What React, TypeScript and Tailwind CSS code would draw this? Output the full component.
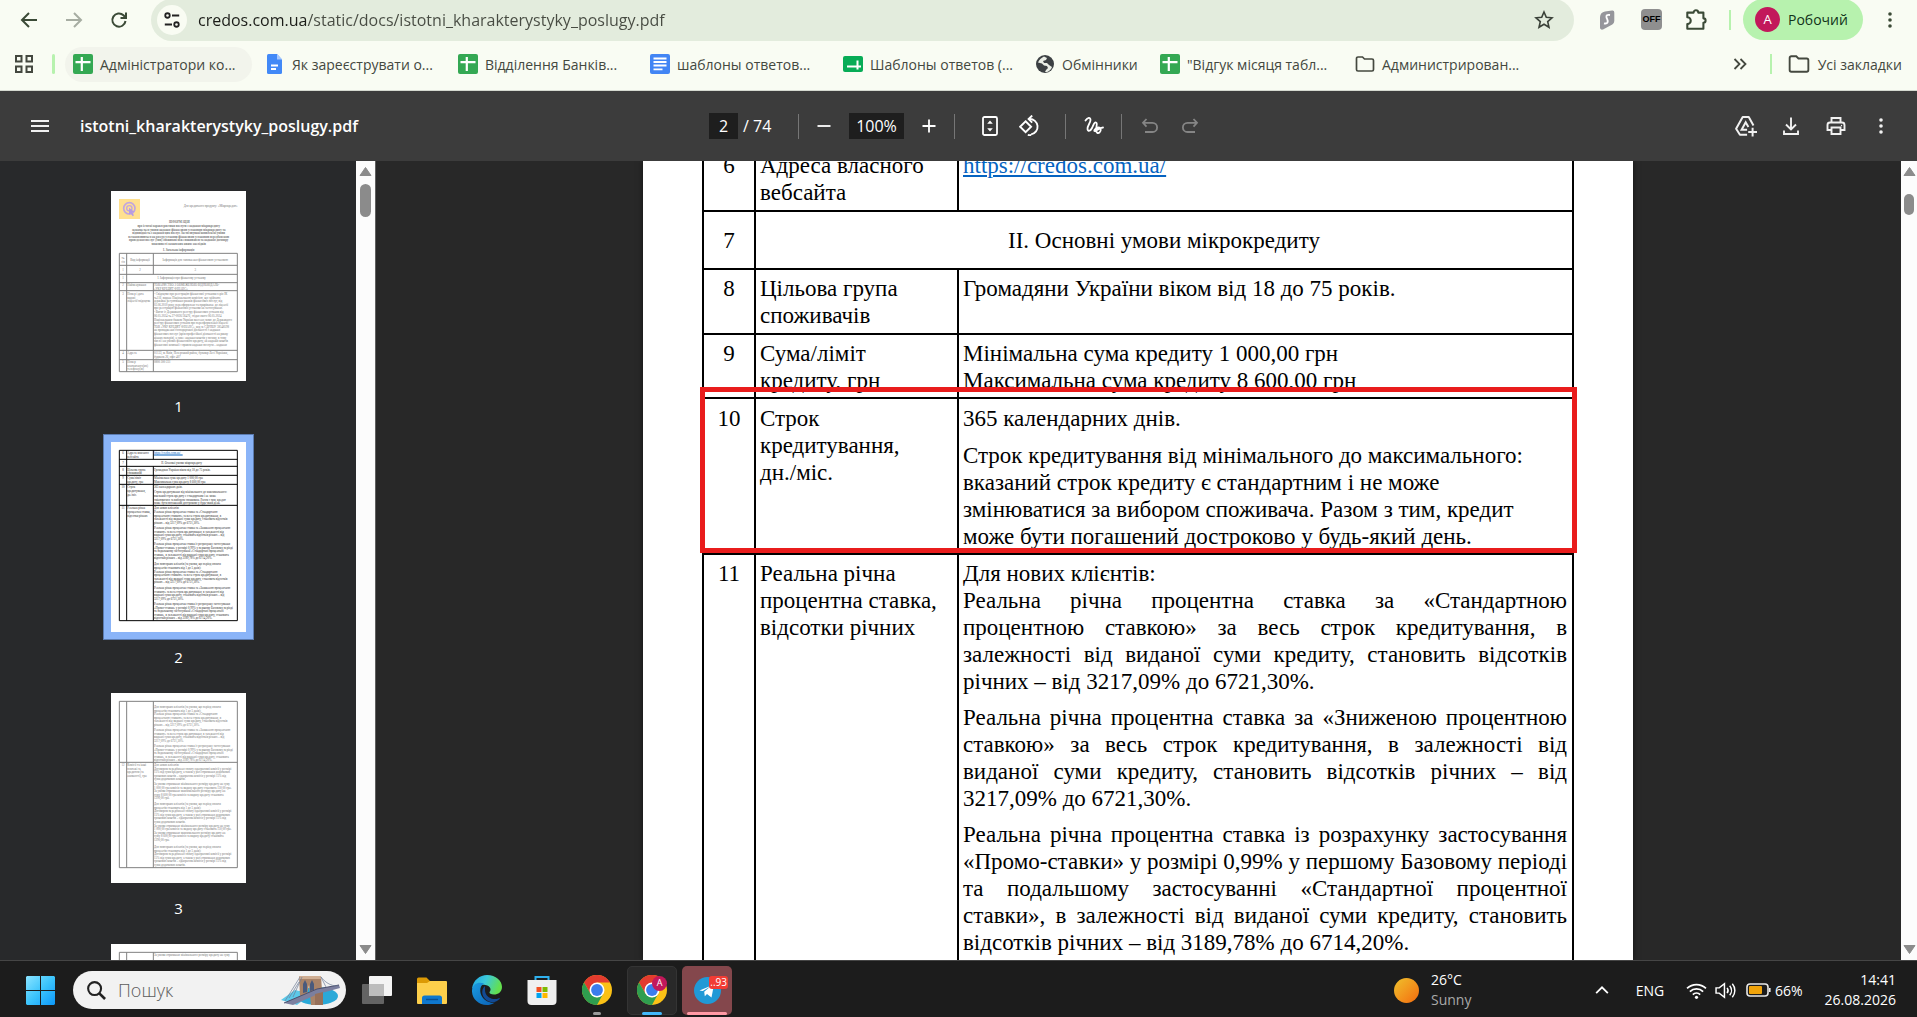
import type { ReactNode } from "react";

/* ---------- small icons ---------- */

function Line({ size = 20, w = 2, children, className = "" }: { size?: number; w?: number; children: ReactNode; className?: string }) {
  return (
    <svg width={size} height={size} viewBox="0 0 20 20" fill="none" stroke="currentColor" strokeWidth={w} className={className} aria-hidden="true">
      {children}
    </svg>
  );
}

const Dots = () => (
  <svg width="20" height="20" viewBox="0 0 20 20" fill="currentColor" aria-hidden="true">
    <circle cx="10" cy="4" r="1.8" />
    <circle cx="10" cy="10" r="1.8" />
    <circle cx="10" cy="16" r="1.8" />
  </svg>
);

const SheetIcon = () => (
  <svg width="20" height="20" viewBox="0 0 20 20" aria-hidden="true">
    <rect width="20" height="20" rx="2" fill="#34a853" />
    <path d="M2.5 8.2h15M8.8 3v14" stroke="#fff" strokeWidth="2.2" />
  </svg>
);
const DocIcon = () => (
  <svg width="20" height="20" viewBox="0 0 20 20" aria-hidden="true">
    <path d="M3.5 0H12l5 5.5V18.500a1.500 1.500 0 0 1-1.500 1.500h-12A1.500 1.500 0 0 1 2 18.500v-17A1.500 1.500 0 0 1 3.500 0z" fill="#4289f7" />
    <path d="M12 0l5 5.500h-5z" fill="#a6c8ff" />
    <path d="M6 11.500h7M6 15h5" stroke="#fff" strokeWidth="1.800" />
  </svg>
);
const DocLinesIcon = () => (
  <svg width="20" height="20" viewBox="0 0 20 20" aria-hidden="true">
    <rect width="20" height="20" rx="2" fill="#4285f4" />
    <path d="M3.500 4.500h13M3.500 8h13M3.500 11.500h13M3.500 15.300h9" stroke="#fff" strokeWidth="1.800" />
  </svg>
);
const FormIcon = () => (
  <svg width="20" height="20" viewBox="0 0 20 20" aria-hidden="true">
    <rect y="2" width="20" height="16" rx="2" fill="#07ac56" />
    <path d="M4 12.500h14M14.500 6.500v9" stroke="#fff" strokeWidth="2" />
  </svg>
);
const GlobeIcon = () => (
  <svg width="20" height="20" viewBox="0 0 20 20" aria-hidden="true">
    <circle cx="10" cy="10" r="9" fill="#3c4043" />
    <path d="M9 2.500c-2 1-5 3-6 6l4 1 2 2 3 .5 1 2-2 2-1 2c3 .5 6-2 7-5l-3-2-2-2H9L8 7l3-1 1-2z" fill="#f9fcf3" opacity=".92" />
  </svg>
);
const FolderIcon = () => (
  <Line size={22} w={1.700}>
    <path d="M1.500 4.500a1.500 1.500 0 0 1 1.500-1.500h4.500l2 2h7.500a1.500 1.500 0 0 1 1.500 1.500v9a1.500 1.500 0 0 1-1.500 1.500H3a1.500 1.500 0 0 1-1.500-1.500z" />
  </Line>
);

/* ---------- browser chrome ---------- */

const bookmarks: { label: string; icon: ReactNode; cls: string }[] = [
  { label: "Адміністратори ко...", icon: <SheetIcon />, cls: "w-[187px] bg-[#f2f4ec]" },
  { label: "Як зареєструвати о...", icon: <DocIcon />, cls: "w-[188px]" },
  { label: "Відділення Банків...", icon: <SheetIcon />, cls: "w-[187px]" },
  { label: "шаблоны ответов...", icon: <DocLinesIcon />, cls: "w-[188px]" },
  { label: "Шаблоны ответов (...", icon: <FormIcon />, cls: "w-[187px]" },
  { label: "Обмінники", icon: <GlobeIcon />, cls: "w-[120px]" },
  { label: '"Відгук місяця табл...', icon: <SheetIcon />, cls: "w-[190px]" },
  { label: "Администрирован...", icon: <FolderIcon />, cls: "w-[187px]" },
];

function IconButton({ label, className, children }: { label: string; className: string; children: ReactNode }) {
  return (
    <button type="button" aria-label={label} className={`flex h-9 shrink-0 items-center justify-center ${className}`}>
      {children}
    </button>
  );
}

function AddressRow() {
  return (
    <div className="flex h-10 items-center pb-px pl-[6px] text-[#3b4a36]">
      <IconButton label="Назад" className="w-[45px]">
        <Line><path d="M18 10H3M10 3l-7 7 7 7" /></Line>
      </IconButton>
      <IconButton label="Вперед" className="w-[45px] text-[#a7ada2]">
        <Line><path d="M2 10h15M10 3l7 7-7 7" /></Line>
      </IconButton>
      <IconButton label="Оновити" className="w-[45px]">
        <Line><path d="M16.500 11a6.600 6.600 0 1 1-2-5.700L16.500 7.500M17 2.500v5.500h-5.500" /></Line>
      </IconButton>
      <div className="ml-[10px] flex h-[42px] flex-1 items-center rounded-full bg-[#e3ecdd] pl-[6px] pr-[20px]">
        <button type="button" aria-label="Відомості про сайт" className="flex size-[30px] items-center justify-center rounded-full bg-[#f9fcf3] text-[#222]">
          <Line size={18}>
            <circle cx="5" cy="5" r="2.500" /><path d="M10 5h8M2 15h8" /><circle cx="15" cy="15" r="2.500" />
          </Line>
        </button>
        <input
          aria-label="Адреса"
          defaultValue="credos.com.ua/static/docs/istotni_kharakterystyky_poslugy.pdf"
          className="ml-[11px] min-w-0 flex-1 bg-[linear-gradient(to_right,#1b1c18_110px,#474b42_110px)] bg-clip-text text-[16px] text-transparent outline-none"
        />
        <button type="button" aria-label="Додати закладку" className="text-[#3a4138]">
          <Line w={1.600}><path d="M10 2l2.300 5.300 5.700.5-4.300 3.800 1.300 5.700-5-3-5 3 1.300-5.700L2 7.800l5.700-.5z" /></Line>
        </button>
      </div>
      <IconButton label="Розширення S" className="ml-[10px] w-[45px]">
        <svg width="18" height="20" viewBox="0 0 18 20" aria-hidden="true">
          <path d="M7 1.500L14 .5a2 2 0 0 1 2.300 2V11a4 4 0 0 1-2 3.400L5 19.500c-1.500.5-3-.2-3-2V7A6 6 0 0 1 7 1.500z" fill="#96969b" />
          <path d="M12 5c-3-.5-4 .5-3.500 2.500S11 11 9 13c-.8.6-2 .6-3 .3" fill="none" stroke="#fff" strokeWidth="1.800" />
        </svg>
      </IconButton>
      <IconButton label="Розширення OFF" className="w-[45px]">
        <span className="flex size-[21px] items-center justify-center rounded-[4px] bg-[#8f8f8f] font-['Liberation_Sans'] text-[9px] font-bold text-black">OFF</span>
      </IconButton>
      <IconButton label="Розширення" className="w-[45px]">
        <Line size={23} w={1.800}>
          <path d="M2 4h5.500a2 2 0 0 1 4 0H16v5a1.900 1.900 0 0 1 0 3.800V18H2v-4a3 3 0 0 0 0-6z" strokeLinejoin="round" />
        </Line>
      </IconButton>
      <span className="ml-[10px] h-5 w-[2px] bg-[#b7f2ae]" />
      <button type="button" className="ml-[12px] flex h-[41px] w-[120px] items-center rounded-full bg-[#b7f2ae] pl-[12px] text-[14px] text-[#12331a]">
        <span className="mr-2 flex size-[25px] items-center justify-center rounded-full bg-[#c2185b] text-[13px] text-white">A</span>
        Робочий
      </button>
      <IconButton label="Меню Chrome" className="w-[54px]"><Dots /></IconButton>
    </div>
  );
}

function BookmarksRow() {
  return (
    <nav aria-label="Закладки" className="flex h-[51px] items-center border-b border-[#d5d9d0] pb-[2px] text-[14px] text-[#44483f]">
      <IconButton label="Програми" className="ml-[6px] w-9">
        <Line><path d="M2 2h5.500v5.500H2zM12.500 2H18v5.500h-5.500zM2 12.500h5.500V18H2zM12.500 12.500H18V18h-5.500z" /></Line>
      </IconButton>
      <span className="ml-[10px] h-5 w-[3px] rounded-full bg-[#b7f2ae]" />
      <div className="ml-[10px] flex min-w-0 gap-[5px]">
        {bookmarks.map((b) => (
          <a key={b.label} href="#" className={`flex h-[35px] shrink-0 items-center gap-[7px] rounded-full pl-2 whitespace-nowrap ${b.cls}`}>
            <span className="flex w-5 shrink-0 justify-center">{b.icon}</span>
            {b.label}
          </a>
        ))}
      </div>
      <div className="ml-auto flex items-center">
        <button type="button" aria-label="Інші закладки"><Line size={20} w={1.800}><path d="M4.500 5l5 5-5 5M10.500 5l5 5-5 5" /></Line></button>
        <span className="ml-5 h-5 w-[2px] bg-[#b7f2ae]" />
        <a href="#" className="ml-[16px] mr-[15px] flex items-center gap-2"><FolderIcon />Усі закладки</a>
      </div>
    </nav>
  );
}

/* ---------- PDF toolbar ---------- */

const Sep = ({ className }: { className: string }) => <span className={`h-[25px] w-px bg-[#767676] ${className}`} />;

function PdfToolbar() {
  return (
    <header className="grid h-[70px] shrink-0 grid-cols-[1fr_auto_1fr] items-center bg-[#3c3c3c] text-[#f1f1f1]">
      <div className="flex items-center">
        <IconButton label="Меню" className="ml-5 w-10"><Line w={1.800}><path d="M1 5h18M1 10h18M1 15h18" /></Line></IconButton>
        <h1 className="ml-5 text-[16px] font-semibold text-white">istotni_kharakterystyky_poslugy.pdf</h1>
      </div>
      <div className="flex items-center pl-[2px] text-[16px] text-white">
        <input aria-label="Сторінка" defaultValue="2" className="h-[26px] w-[29px] bg-[#1e1e1e] text-center outline-none" />
        <span className="ml-[5px] w-[31px] whitespace-nowrap">/ 74</span>
        <Sep className="ml-6" />
        <IconButton label="Зменшити" className="ml-[5px] w-10"><Line w={1.800}><path d="M3.500 10h13" /></Line></IconButton>
        <input aria-label="Масштаб" defaultValue="100%" className="ml-[5px] h-[26px] w-[55px] bg-[#1e1e1e] text-center outline-none" />
        <IconButton label="Збільшити" className="ml-[5px] w-10"><Line w={1.800}><path d="M3.500 10h13M10 3.500v13" /></Line></IconButton>
        <Sep className="ml-[5px]" />
        <IconButton label="За розміром сторінки" className="ml-[15px] w-10">
          <Line w={1.800}>
            <rect x="3" y="1" width="14" height="18" rx="1.500" />
            <path d="M10 4.500l2.800 3.300H7.200zM10 15.500l2.800-3.300H7.200z" fill="currentColor" stroke="none" />
          </Line>
        </IconButton>
        <IconButton label="Повернути" className="w-10">
          <Line size={22} w={1.700}>
            <path d="M6 5.700l5 5-5 5-5-5z" />
            <path d="M9.500 3.700a7 7 0 0 1 1.500 13.900M11 18.200a7.600 7.600 0 0 1-3-.2" />
            <path d="M12 .5L8.700 3.700 12 7" />
          </Line>
        </IconButton>
        <Sep className="ml-[15px]" />
        <IconButton label="Анотувати" className="ml-[8px] w-10">
          <Line w={1.800}>
            <path d="M1.500 4.500C3.500 1.500 6.500.8 6.500 4 6.500 7 3 10 3.500 13s3 2 4.500-1 2-6 4-5.500 0 4.500 0 7 1.500 4.500 3.500 3 1.500-5-1-5-5 3-4 3.500 5-3.500 8.500-3.500" strokeLinecap="round" />
          </Line>
        </IconButton>
        <Sep className="ml-[7px]" />
        <IconButton label="Скасувати" className="ml-[8px] w-10 text-[#858585]">
          <Line w={1.800}><path d="M6.500 3L3 6.800l3.500 3.800M3 6.800h9.500a4.600 4.600 0 0 1 0 9.200H5" /></Line>
        </IconButton>
        <IconButton label="Повторити" className="w-10 text-[#858585]">
          <Line w={1.800}><path d="M13.500 3L17 6.800l-3.500 3.800M17 6.800H7.500a4.600 4.600 0 0 0 0 9.200H15" /></Line>
        </IconButton>
      </div>
      <div className="flex justify-end pr-[14px]">
        <IconButton label="Зберегти на Диску" className="w-[45px]">
          <Line size={22} w={1.800}>
            <path d="M11 18H4.500L1 12.500 7 1.800h5.500l4.300 7.700" strokeLinejoin="round" />
            <path d="M11 13.500H6l3.700-6.800 2.500 4.300M16 11.500v8M12 15.500h8" />
          </Line>
        </IconButton>
        <IconButton label="Завантажити" className="w-[45px]">
          <Line w={1.900}><path d="M10 1.500v11.500M5 8.500l5 5 5-5M3 14.500V18h14v-3.500" /></Line>
        </IconButton>
        <IconButton label="Друк" className="w-[45px]">
          <Line w={1.900}>
            <path d="M5.500 6.500V2h9v4.500M5.500 14H1.500V9A2.500 2.500 0 0 1 4 6.500h12A2.500 2.500 0 0 1 18.500 9v5h-4M5.500 11.500h9V18h-9z" />
            <circle cx="15.500" cy="9.500" r=".7" fill="currentColor" stroke="none" />
          </Line>
        </IconButton>
        <IconButton label="Інші дії" className="w-[45px]"><Dots /></IconButton>
      </div>
    </header>
  );
}

/* ---------- shared document text, one entry per printed line ---------- */

const std = ["Реальна річна процентна ставка за «Стандартною", "процентною ставкою» за весь строк кредитування, в", "залежності від виданої суми кредиту, становить відсотків", "річних – від 3217,09% до 6721,30%."];
const low = ["Реальна річна процентна ставка за «Зниженою процентною", "ставкою» за весь строк кредитування, в залежності від", "виданої суми кредиту, становить відсотків річних – від", "3217,09% до 6721,30%."];
const promo = ["Реальна річна процентна ставка із розрахунку застосування", "«Промо-ставки» у розмірі 0,99% у першому Базовому періоді", "та подальшому застосуванні «Стандартної процентної", "ставки», в залежності від виданої суми кредиту, становить", "відсотків річних – від 3189,78% до 6714,20%."];
const repeat = ["Для повторних клієнтів (за умови, що період оплати", "процентів становить від 1 до 5 днів):"];
const fee = ["Договором передбачено сплату одноразової комісії у розмірі", "15% від суми кредиту, а також у разі отримання додаткових", "грошових коштів – одноразова комісія у розмірі 15% від", "суми додаткових коштів."];
const feeMin = ["За умови отримання мінімального розміру кредиту на суму", "1 000,00 грн комісія за видачу кредиту становить 150,00 грн.", "За умови отримання максимального розміру кредиту на", "суму 8 600,00 грн комісія за видачу кредиту становить", "1290,00 грн."];

/* ---------- thumbnails ---------- */

type TextRun = { x: number; y: number; lines: string[]; center?: boolean; bold?: boolean; link?: boolean };
type Preview = { page: number; ink: string; rule: string; rows: number[]; cols: [number, number, number][]; text: TextRun[] };

const previews: Preview[] = [
  {
    page: 1, ink: "#777", rule: "#808080",
    rows: [187, 223, 250, 275, 299, 478, 506, 542],
    cols: [[25, 187, 542], [47, 187, 542], [127, 187, 250], [127, 275, 542], [379, 187, 542]],
    text: [
      { x: 299, y: 48, center: true, lines: ["Для кредитного продукту: «Мікрокредит»"] },
      { x: 205, y: 95, center: true, bold: true, lines: ["ІНФОРМАЦІЯ"] },
      { x: 203, y: 108, center: true, bold: true, lines: ["про істотні характеристики послуги з надання мікрокредиту", "зазначається умови надання фінансовою установою мікрокредиту та", "відповідність з надання цих послуг. Застосовувані/комплексні умови", "встановлюються на розсуд установи фінансовою установою передбаченою", "проведення послуг (тип) споживачі між споживачем та надання договору", "можливості зазначених нижче наслідків"] },
      { x: 203, y: 180, center: true, bold: true, lines: ["І. Загальна інформація"] },
      { x: 36, y: 204, center: true, lines: ["№", "з/п"] },
      { x: 87, y: 210, center: true, lines: ["Вид інформації"] },
      { x: 253, y: 210, center: true, lines: ["Інформація для заповнення фінансовою установою"] },
      { x: 36, y: 240, center: true, lines: ["1"] }, { x: 87, y: 240, center: true, lines: ["2"] }, { x: 253, y: 240, center: true, lines: ["3"] },
      { x: 36, y: 265, center: true, lines: ["1"] },
      { x: 212, y: 265, center: true, lines: ["І. Інформація про фінансову установу"] },
      { x: 36, y: 286, center: true, lines: ["2"] }, { x: 49, y: 286, lines: ["Найменування"] },
      { x: 129, y: 286, lines: ["ТОВАРИСТВО З ОБМЕЖЕНОЮ ВІДПОВІДАЛЬ-", "«УКР КРЕДИТ ФІНАНС»"] },
      { x: 36, y: 312, center: true, lines: ["3"] }, { x: 49, y: 312, lines: ["Номер і дата", "видачі", "ліцензії/свідоцтва"] },
      { x: 129, y: 312, lines: ["- Свідоцтво про реєстрацію фінансової установи серія ІК", "№116, видане Національною комісією, що здійснює", "державне регулювання ринків фінансових послуг, від", "03.06.2010 року, переоформлено та прирівняне до ліцензії", "про реєстрацію фінансової установи на застосування."] },
      { x: 129, y: 367, lines: ["- Витяг із Державного реєстру фінансових установ від", "06.05.2024 № 27-0026/36476, згідно якого 06.05.2024", "Національним банком України внесено запис до Державного", "реєстру фінансових установ про переоформлення ліцензії", "ТОВ «УКР КРЕДИТ ФІНАНС», код за ЄДРПОУ 38548598", "на провадження господарської діяльності з надання", "фінансових послуг (крім професійної діяльності на ринку", "цінних паперів), а саме: надання коштів у позику, в тому", "числі і на умовах фінансового кредиту, на надання коштів", "фінансової компанії з правом надання послуги – надання"] },
      { x: 36, y: 490, center: true, lines: ["4"] }, { x: 49, y: 490, lines: ["Адреса"] },
      { x: 129, y: 490, lines: ["01133, м. Київ, Печерський район, бульвар Лесі Українки,", "будинок 26, офіс 407"] },
      { x: 36, y: 516, center: true, lines: ["5"] }, { x: 49, y: 516, lines: ["Номер", "контактного(их)", "телефону(ів)"] },
      { x: 129, y: 516, lines: ["0800 300 231"] },
    ],
  },
  {
    page: 2, ink: "#333", rule: "#000",
    rows: [25, 52, 73, 100, 127, 190, 536],
    cols: [[25, 25, 536], [47, 25, 536], [127, 25, 52], [127, 73, 536], [379, 25, 536]],
    text: [
      { x: 36, y: 37, center: true, lines: ["6"] }, { x: 49, y: 37, lines: ["Адреса власного", "вебсайта"] }, { x: 129, y: 37, link: true, lines: ["https://credos.com.ua/"] },
      { x: 36, y: 66, center: true, lines: ["7"] }, { x: 212, y: 66, center: true, lines: ["ІІ. Основні умови мікрокредиту"] },
      { x: 36, y: 87, center: true, lines: ["8"] }, { x: 49, y: 86, lines: ["Цільова група", "споживачів"] }, { x: 129, y: 86, lines: ["Громадяни України віком від 18 до 75 років."] },
      { x: 36, y: 112, center: true, lines: ["9"] }, { x: 49, y: 112, lines: ["Сума/ліміт", "кредиту, грн"] }, { x: 129, y: 112, lines: ["Мінімальна сума кредиту 1 000,00 грн", "Максимальна сума кредиту 8 600,00 грн"] },
      { x: 36, y: 139, center: true, lines: ["10"] }, { x: 49, y: 139, lines: ["Строк", "кредитування,", "дн./міс."] }, { x: 129, y: 139, lines: ["365 календарних днів."] },
      { x: 129, y: 154, lines: ["Строк кредитування від мінімального до максимального:", "вказаний строк кредиту є стандартним і не може", "змінюватися за вибором споживача. Разом з тим, кредит", "може бути погашений достроково у будь-який день."] },
      { x: 36, y: 202, center: true, lines: ["11"] }, { x: 49, y: 202, lines: ["Реальна річна", "процентна ставка,", "відсотки річних"] },
      { x: 129, y: 202, lines: ["Для нових клієнтів:", ...std] }, { x: 129, y: 261, lines: low }, { x: 129, y: 309, lines: promo },
      { x: 129, y: 370, lines: [...repeat, ...std] }, { x: 129, y: 441, lines: low }, { x: 129, y: 489, lines: promo },
    ],
  },
  {
    page: 3, ink: "#777", rule: "#808080",
    rows: [25, 208, 524],
    cols: [[25, 25, 524], [47, 25, 524], [127, 25, 524], [379, 25, 524]],
    text: [
      { x: 129, y: 45, lines: [...repeat, ...std] }, { x: 129, y: 114, lines: low }, { x: 129, y: 162, lines: promo },
      { x: 36, y: 219, center: true, lines: ["12"] }, { x: 49, y: 219, lines: ["Комісії та інші", "платежі за", "кредитом (за", "наявності), грн"] },
      { x: 129, y: 219, lines: ["Для нових клієнтів:", ...fee] }, { x: 129, y: 276, lines: feeMin },
      { x: 129, y: 336, lines: [...repeat, ...fee, ...feeMin] }, { x: 129, y: 465, lines: [...repeat, ...fee] },
    ],
  },
  {
    page: 4, ink: "#777", rule: "#808080",
    rows: [25],
    cols: [[25, 25, 500], [47, 25, 500], [127, 25, 500], [379, 25, 500]],
    text: [{ x: 129, y: 36, lines: feeMin.slice(0, 1) }],
  },
];

function PagePreview({ p }: { p: Preview }) {
  return (
    <svg viewBox="0 0 405 570" className="h-[190px] w-[135px] bg-white font-['Liberation_Serif',serif] text-[9px]" aria-label={`Мініатюра сторінки ${p.page}`}>
      {p.page === 1 && (
        <g>
          <rect x="24" y="24" width="63" height="60" fill="#ffe08f" />
          <circle cx="55" cy="52" r="17" fill="none" stroke="#c0a5df" strokeWidth="5" />
          <circle cx="55" cy="52" r="8" fill="none" stroke="#c0a5df" strokeWidth="4" />
          <path d="M54 50l16 12-7 2 6 9-4 3-6-9-5 4z" fill="#b79be0" />
        </g>
      )}
      {p.rows.map((y) => (
        <path key={y} d={`M25 ${y}H379`} stroke={p.rule} strokeWidth="3" />
      ))}
      {p.cols.map(([x, a, b]) => (
        <path key={`${x}-${a}`} d={`M${x} ${a}V${b}`} stroke={p.rule} strokeWidth="3" />
      ))}
      {p.text.map((t, i) => (
        <g key={i} fill={t.link ? "#0563c1" : p.ink} fontWeight={t.bold ? 700 : 400} textAnchor={t.center ? "middle" : "start"}>
          {t.link && <path d={`M${t.x} ${t.y + 2}h86`} stroke="#0563c1" strokeWidth="3" />}
          {t.lines.map((s, j) => (
            <text key={j} x={t.x} y={t.y + j * 10.800}>{s}</text>
          ))}
        </g>
      ))}
    </svg>
  );
}

function ScrollBar({ width, thumb }: { width: string; thumb: string }) {
  return (
    <div className={`flex shrink-0 flex-col items-center bg-[#fcfcfc] py-[5px] ${width}`}>
      <svg width="13" height="11" viewBox="0 0 13 11" aria-hidden="true"><path d="M6.500 1.500L12 9.500H1z" fill="#8b8b8b" stroke="#8b8b8b" strokeLinejoin="round" /></svg>
      <div className={`rounded-full bg-[#8b8b8b] ${thumb}`} />
      <svg className="mt-auto" width="13" height="11" viewBox="0 0 13 11" aria-hidden="true"><path d="M6.500 9.500L12 1.500H1z" fill="#8b8b8b" stroke="#8b8b8b" strokeLinejoin="round" /></svg>
    </div>
  );
}

function Sidebar() {
  return (
    <aside className="flex shrink-0 border-r border-[#5f5f5f] bg-[#28292b]">
      <div className="flex w-[356px] flex-col items-center overflow-hidden pl-px pt-[22px]">
        {previews.map((p) => (
          <a key={p.page} href="#" className="mb-[13px] flex shrink-0 flex-col items-center">
            <span className={p.page === 2 ? "border border-[#5b7bb0] bg-[#8ab4f8] p-[7px]" : "p-2"}><PagePreview p={p} /></span>
            <span className="mt-[2px] flex h-[30px] items-center text-[15px] leading-5 text-white">{p.page}</span>
          </a>
        ))}
      </div>
      <ScrollBar width="w-[19px]" thumb="mt-[7px] h-[33px] w-[11px]" />
    </aside>
  );
}

/* ---------- document ---------- */

function Row({ n, title, h, pad = "pt-[5px]", children }: { n: number; title: ReactNode; h: string; pad?: string; children: ReactNode }) {
  return (
    <tr className={`align-top ${h}`}>
      <td className={`border-2 border-black text-center ${pad}`}>{n}</td>
      <td className={`border-2 border-black pl-1 ${pad}`}>{title}</td>
      <td className={`border-2 border-black pl-1 pr-[5px] ${pad}`}>{children}</td>
    </tr>
  );
}

function Justified({ lines }: { lines: string[] }) {
  return (
    <p>
      {lines.map((s, i) => (
        <span key={s} className={i < lines.length - 1 ? "block whitespace-nowrap [text-align-last:justify]" : "block"}>
          {s}{" "}
        </span>
      ))}
    </p>
  );
}

function DocumentPage() {
  return (
    <article className="relative mx-auto h-full w-[990px] shrink-0 bg-white px-[59px] font-['Liberation_Serif','Times_New_Roman',serif] text-[23px] leading-[27px] text-black shadow-[0_0_6px_#0008]">
      <table className="-mt-4 w-full table-fixed border-collapse">
        <colgroup>
          <col className="w-[52px]" />
          <col className="w-[203px]" />
          <col />
        </colgroup>
        <tbody>
          <Row n={6} title="Адреса власного вебсайта" h="h-[65px]">
            <a href="#" className="text-[#0563c1] underline decoration-2 underline-offset-2">https://credos.com.ua/</a>
          </Row>
          <tr className="h-[58px] text-center">
            <td className="border-2 border-black">7</td>
            <td colSpan={2} className="border-2 border-black">II. Основні умови мікрокредиту</td>
          </tr>
          <Row n={8} title="Цільова група споживачів" h="h-[65px]">Громадяни України віком від 18 до 75 років.</Row>
          <Row n={9} title={<>Сума/ліміт<br />кредиту, грн</>} h="h-[64px]">
            <p>Мінімальна сума кредиту 1 000,00 грн</p>
            <p>Максимальна сума кредиту 8 600,00 грн</p>
          </Row>
          <Row n={10} title={<>Строк<br />кредитування,<br />дн./міс.</>} h="h-[156px]" pad="pt-[6px]">
            <p>365 календарних днів.</p>
            <p className="mt-[10px]">
              Строк кредитування від мінімального до максимального:<br />
              вказаний строк кредиту є стандартним і не може<br />
              змінюватися за вибором споживача. Разом з тим, кредит<br />
              може бути погашений достроково у будь-який день.
            </p>
          </Row>
          <Row n={11} title="Реальна річна процентна ставка, відсотки річних" h="h-[420px]">
            <p>Для нових клієнтів:</p>
            <div className="space-y-[9px]">
              <Justified lines={std} />
              <Justified lines={low} />
              <Justified lines={promo} />
            </div>
          </Row>
        </tbody>
      </table>
      <div className="pointer-events-none absolute left-[57px] right-[56px] top-[226px] h-[166px] border-5 border-[#e91c1c]" />
    </article>
  );
}

/* ---------- taskbar ---------- */

const ChromeLogo = () => (
  <svg width="30" height="30" viewBox="0 0 30 30" aria-hidden="true">
    <circle cx="15" cy="15" r="15" fill="#fbc116" />
    <path d="M2 7.500A15 15 0 0 1 28 7.500H15L8.500 18.700z" fill="#e33b2e" />
    <path d="M2 7.500L8.500 18.700 15 22.500l6-3.500L15 30A15 15 0 0 1 2 7.500z" fill="#2f9e4f" />
    <circle cx="15" cy="15" r="7.500" fill="#fff" />
    <circle cx="15" cy="15" r="5.900" fill="#3b7ded" />
  </svg>
);

const Bridge = () => (
  <svg width="60" height="32" viewBox="0 0 60 32" aria-hidden="true">
    <ellipse cx="36" cy="22" rx="21" ry="9" fill="#2aa9d8" />
    <path d="M0 26l14-10 16 4-14 11z" fill="#5cc9ea" />
    <path d="M18 2h22l2 29H30l-2-20-2 9-7 2z" fill="#a98368" />
    <path d="M18 2h22v3H18z" fill="#cfae93" />
    <path d="M22 19V10l2-4 2 4v8zM29 17V10l2-4 2 4v6z" fill="#4a5a7c" />
    <path d="M3 29L36 15l22-4 1 3-22 6-25 11z" fill="#7b7f9f" />
    <path d="M3 29L36 15l22-4" fill="none" stroke="#4b4e6c" />
    <path d="M34 20l8-2v13h-8z" fill="#96705a" />
    <path d="M19 3L4 27M21 3l-9 20M40 3c4 5 9 9 17 9M40 3l5 10M18 8L8 24" fill="none" stroke="#6f7c97" strokeWidth=".7" />
  </svg>
);

function TaskButton({ label, className = "", children }: { label: string; className?: string; children: ReactNode }) {
  return (
    <button type="button" aria-label={label} className={`relative flex h-[49px] w-[50px] items-center justify-center rounded-[5px] ${className}`}>
      {children}
    </button>
  );
}

function Taskbar() {
  return (
    <footer className="flex h-[57px] shrink-0 items-center border-t border-[#454545] bg-[#1c1c1c] pt-[2px] text-[14px] text-white">
      <button type="button" aria-label="Пуск" className="ml-[26px]">
        <svg width="29" height="29" viewBox="0 0 29 29" aria-hidden="true">
          <defs>
            <linearGradient id="win" x1="0" y1="0" x2="1" y2="1"><stop stopColor="#8be4ff" /><stop offset=".5" stopColor="#3cc4fc" /><stop offset="1" stopColor="#0c97f8" /></linearGradient>
          </defs>
          <path d="M1 0h13v14H0V1zM15 0h13l1 1v13H15zM0 15h14v14H1l-1-1zM15 15h14v13l-1 1H15z" fill="url(#win)" />
        </svg>
      </button>
      <label className="ml-[18px] flex h-[38px] w-[273px] items-center rounded-full bg-[#f2f2f2] pl-[14px] pr-[5px] text-[#222]">
        <Line size={19} w={2.200}><circle cx="8" cy="8" r="6.800" /><path d="M13 13l6 6" strokeWidth="2.800" /></Line>
        <input type="search" aria-label="Пошук" placeholder="Пошук" className="ml-3 w-0 min-w-0 flex-1 text-[18px] font-light outline-none placeholder:text-[#5c5c5c]" />
        <Bridge />
      </label>
      <div className="ml-[6px] flex gap-[5px]">
        <TaskButton label="Подання завдань">
          <svg width="30" height="28" viewBox="0 0 30 28" aria-hidden="true">
            <rect y="8" width="22" height="20" rx="1" fill="#636363" />
            <rect x="7" width="23" height="20" rx="1" fill="#f4f4f4" />
            <rect x="7" y="8" width="15" height="12" fill="#bdbdbd" />
          </svg>
        </TaskButton>
        <TaskButton label="Провідник">
          <svg width="30" height="27" viewBox="0 0 30 27" aria-hidden="true">
            <path d="M0 2a1.500 1.500 0 0 1 1.500-1.500h8L13 4v6H0z" fill="#dc9a05" />
            <path d="M0 6h10l3-2h16a1 1 0 0 1 1 1v21a1 1 0 0 1-1 1H1a1 1 0 0 1-1-1z" fill="#fdcf4b" />
            <path d="M5 27v-6a2.500 2.500 0 0 1 2.500-2.500h15A2.500 2.500 0 0 1 25 21v6z" fill="#0f78ce" />
            <path d="M9 22.500h12" stroke="#0a4f92" strokeWidth="1.400" />
          </svg>
        </TaskButton>
        <TaskButton label="Edge">
          <svg width="30" height="30" viewBox="0 0 30 30" aria-hidden="true">
            <defs>
              <linearGradient id="edgeTop" x1="0" y1="0" x2="1" y2=".3"><stop stopColor="#1ea4e8" /><stop offset=".5" stopColor="#3cc9d8" /><stop offset="1" stopColor="#63e04f" /></linearGradient>
              <linearGradient id="edgeLow" x1="0" y1="0" x2="1" y2="1"><stop stopColor="#1b9de2" /><stop offset="1" stopColor="#0a5fb4" /></linearGradient>
            </defs>
            <path d="M0 14C1 5 8 0 15 0c9 0 15 6 15 12 0 5-4 7.500-8 7.500-3 0-5-1-4.500-2.500 2-2 1.500-6-4-7C8 9 2 11 0 14z" fill="url(#edgeTop)" />
            <path d="M0 15C1 8 7 6.500 12 8.500c-4 2-5 8-2 13s9 7 13 6c-3 2-6 2.500-8 2.500C6 30-.5 23 0 15z" fill="url(#edgeLow)" />
            <path d="M13 11c-5 4-3 13 4 15.500 4 1.500 8 .5 10.500-2.500.5-.7 0-1.200-.7-.8C22 25.500 15 23 13.500 18c-.7-2.500-.5-5-.5-7z" fill="#124a94" />
          </svg>
        </TaskButton>
        <TaskButton label="Microsoft Store">
          <svg width="30" height="30" viewBox="0 0 30 30" aria-hidden="true">
            <path d="M8.500 6V2h13v4" fill="none" stroke="#2fb1ee" strokeWidth="2" />
            <path d="M.5 5h29v21a4 4 0 0 1-4 4h-21a4 4 0 0 1-4-4z" fill="#f0f0f0" />
            <path d="M9.500 12h5v5h-5z" fill="#f25022" /><path d="M15.500 12h5v5h-5z" fill="#7fba00" />
            <path d="M9.500 18h5v5h-5z" fill="#00a4ef" /><path d="M15.500 18h5v5h-5z" fill="#ffb900" />
          </svg>
        </TaskButton>
        <TaskButton label="Chrome">
          <ChromeLogo />
          <span className="absolute bottom-0 h-[3px] w-2 rounded-full bg-[#9b9b9b]" />
        </TaskButton>
        <TaskButton label="Chrome, робочий профіль" className="border border-[#343434] bg-[#292929]">
          <ChromeLogo />
          <span className="absolute right-[9px] top-[9px] flex size-[15px] items-center justify-center rounded-full bg-[#c2185b] text-[9px]">A</span>
          <span className="absolute -bottom-px h-[3px] w-5 rounded-full bg-[#42b8fa]" />
        </TaskButton>
        <TaskButton label="Telegram" className="bg-[#84474c]">
          <svg width="27" height="27" viewBox="0 0 27 27" aria-hidden="true">
            <circle cx="13.500" cy="13.500" r="13.500" fill="#2199d6" />
            <path d="M5.500 13.500L20 7.500l-2.500 13-4.500-3.500-2.200 2.200-.6-4.500 6.500-5.500-8 4.800z" fill="#fff" />
          </svg>
          <span className="absolute right-1 top-[10px] flex h-[13px] items-center rounded-[3px] bg-[#f23c34] px-px text-[10px] leading-none">..93</span>
          <span className="absolute bottom-0 h-[3px] w-10 rounded-full bg-[#ff9aa5]" />
        </TaskButton>
      </div>
      <div className="ml-auto flex items-center pr-[21px]">
        <button type="button" className="flex w-[190px] items-center gap-3 text-left leading-5">
          <span className="size-[25px] rounded-full bg-linear-to-br from-[#edc02c] to-[#f2690d]" />
          <span>26°C<br /><span className="text-[#a9a9a9]">Sunny</span></span>
        </button>
        <button type="button" aria-label="Приховані піктограми" className="flex w-9 justify-center">
          <Line size={18}><path d="M3.500 13.500L10 7l6.500 6.500" /></Line>
        </button>
        <button type="button" className="w-[60px]">ENG</button>
        <button type="button" aria-label="Мережа, звук, заряд" className="flex w-[130px] items-center pl-[6px]">
          <Line size={21} w={1.700}>
            <path d="M1 8a13 13 0 0 1 18 0M3.700 11a9 9 0 0 1 12.600 0M6.500 14a5 5 0 0 1 7 0" />
            <circle cx="10" cy="16.500" r="1.500" fill="currentColor" stroke="none" />
          </Line>
          <Line size={21} w={1.400} className="ml-2">
            <path d="M1 7.500v5h3l5 4v-13l-5 4zM11.500 7.500a4 4 0 0 1 0 5M14 5.500a7 7 0 0 1 0 9M16.500 3.500a10 10 0 0 1 0 13" />
          </Line>
          <svg className="ml-[10px]" width="25" height="14" viewBox="0 0 25 14" aria-hidden="true">
            <rect x="1" y="1" width="21" height="12" rx="3" fill="none" stroke="#e8e8e8" strokeWidth="1.600" />
            <rect x="3" y="3" width="13" height="8" rx="1" fill="#f0a30a" />
            <path d="M23.800 5v4" stroke="#e8e8e8" strokeWidth="1.600" />
          </svg>
          <span className="ml-1">66%</span>
        </button>
        <button type="button" className="w-[86px] text-right leading-5">14:41<br />26.08.2026</button>
      </div>
    </footer>
  );
}

export default function App() {
  return (
    <div className="flex h-screen flex-col overflow-hidden bg-[#f9fcf3] font-['Open_Sans','Noto_Sans',sans-serif]">
      <div className="shrink-0">
        <AddressRow />
        <BookmarksRow />
      </div>
      <PdfToolbar />
      <div className="flex min-h-0 flex-1 bg-[#282828]">
        <Sidebar />
        <main className="flex min-w-0 flex-1 overflow-hidden pr-px"><DocumentPage /></main>
        <ScrollBar width="w-4" thumb="mt-[17px] h-[21px] w-[10px]" />
      </div>
      <Taskbar />
    </div>
  );
}
